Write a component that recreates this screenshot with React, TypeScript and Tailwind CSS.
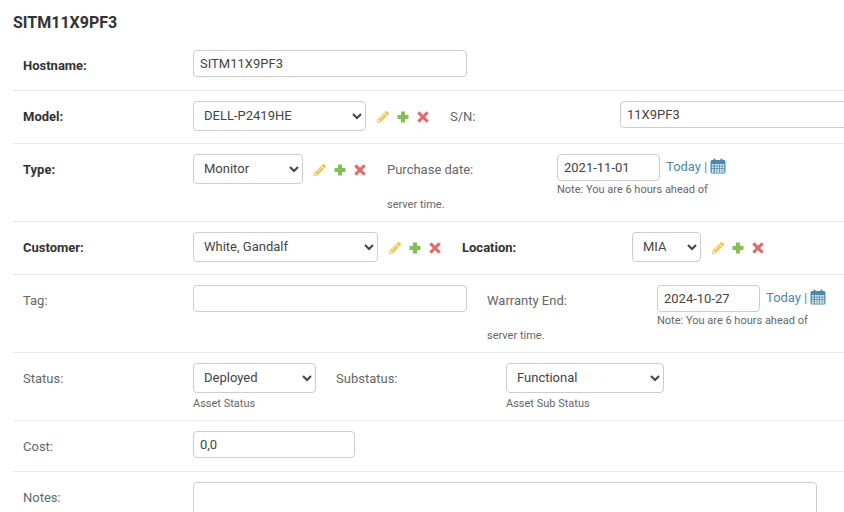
import React from "react";
import { FaPencilAlt } from "react-icons/fa";

const inputCls = "block h-[27px] shrink-0 rounded-[4px] border border-[#ccc] bg-white px-[6px] pb-[1px] text-[13px] text-[#444] outline-none";
const selectCls = "block h-[30px] shrink-0 rounded-[4px] border border-[#ccc] bg-white pl-[6px] pb-[2px] text-[13px] text-[#444] outline-none";

function Actions() {
  return (
    <div className="ml-[11px] mt-[10px] flex shrink-0 items-center gap-[8px]">
      <FaPencilAlt className="h-[12px] w-[12px] text-[#f1c550]" />
      <svg width="12" height="12" viewBox="0 0 12 12">
        <path d="M4 .5h4v3.5h3.5v4H8v3.5H4V8H.5V4H4z" fill="#82c055" />
      </svg>
      <svg width="12" height="12" viewBox="0 0 12 12">
        <path d="M2 2l8 8M10 2l-8 8" stroke="#e26a6a" strokeWidth="3.4" strokeLinecap="square" transform="translate(6 6) scale(.9) translate(-6 -6)" />
      </svg>
    </div>
  );
}

function Calendar() {
  return (
    <svg width="16" height="16" viewBox="0 0 16 16" className="ml-[3px]">
      <rect x="0.5" y="2" width="15" height="13.5" rx="1.5" fill="#4f88a8" />
      <rect x="3.5" y="0.5" width="2" height="3.5" rx="1" fill="#4f88a8" />
      <rect x="10.5" y="0.5" width="2" height="3.5" rx="1" fill="#4f88a8" />
      <g fill="#dfeaf0">
        {[6, 8.5, 11, 13].map((y) =>
          [1.8, 4.8, 7.3, 9.9, 12.4].map((x) => <rect key={`${x}-${y}`} x={x} y={y} width="1.9" height="1.7" />)
        )}
      </g>
    </svg>
  );
}

function DateField({ label, value }: { label: string; value: string }) {
  return (
    <div className="flex flex-col">
      <div className="flex items-start">
        <div className="w-[170px] shrink-0 pt-[6px] text-[13px] text-[#666]">{label}</div>
        <div>
          <div className="flex items-start">
            <input readOnly value={value} className={`${inputCls} w-[103px]`} />
            <a className="ml-[6px] mt-[3px] text-[13px] text-[#4f88a8]">Today</a>
            <span className="ml-[3px] mt-[3px] text-[13px] text-[#4f88a8]">|</span>
            <span className="mt-[4px]"><Calendar /></span>
          </div>
          <div className="mt-px text-[11px] leading-[16px] text-[#666]">Note: You are 6 hours ahead of</div>
        </div>
      </div>
      <div className="-mt-px text-[11px] leading-[16px] text-[#666]">server time.</div>
    </div>
  );
}

function Row({ label, bold, h, children }: { label: string; bold?: boolean; h: string; children?: React.ReactNode }) {
  return (
    <div className={`flex items-start border-b border-[#e8e8e8] pt-[10px] ${h}`}>
      <div className={`w-[180px] shrink-0 pl-[10px] pt-[6px] text-[13px] ${bold ? "font-bold text-[#333]" : "text-[#666]"}`}>{label}</div>
      {children}
    </div>
  );
}

export default function App() {
  return (
    <div className="h-[512px] w-[844px] overflow-hidden bg-white pl-[13px] font-['Roboto',sans-serif]">
      <h1 className="pt-[13px] text-[16px] font-bold leading-[19px] text-[#333]">SITM11X9PF3</h1>
      <div className="mt-[8px]">
        <Row label="Hostname:" bold h="h-[51px]">
          <input readOnly value="SITM11X9PF3" className={`${inputCls} w-[274px]`} />
        </Row>
        <Row label="Model:" bold h="h-[53px]">
          <select className={`${selectCls} w-[173px]`}><option>DELL-P2419HE</option></select>
          <Actions />
          <div className="ml-[21px] w-[170px] shrink-0 pt-[6px] text-[13px] text-[#666]">S/N:</div>
          <input readOnly value="11X9PF3" className={`${inputCls} w-[274px]`} />
        </Row>
        <Row label="Type:" bold h="h-[78px]">
          <select className={`${selectCls} w-[110px]`}><option>Monitor</option></select>
          <Actions />
          <div className="ml-[21px] shrink-0"><DateField label="Purchase date:" value="2021-11-01" /></div>
        </Row>
        <Row label="Customer:" bold h="h-[53px]">
          <select className={`${selectCls} w-[185px]`}><option>White, Gandalf</option></select>
          <Actions />
          <div className="ml-[21px] w-[170px] shrink-0 pt-[6px] text-[13px] font-bold text-[#333]">Location:</div>
          <select className={`${selectCls} w-[69px]`}><option>MIA</option></select>
          <Actions />
        </Row>
        <Row label="Tag:" h="h-[78px]">
          <input readOnly value="" className={`${inputCls} w-[274px]`} />
          <div className="ml-[20px] shrink-0"><DateField label="Warranty End:" value="2024-10-27" /></div>
        </Row>
        <Row label="Status:" h="h-[68px]">
          <div className="shrink-0">
            <select className={`${selectCls} w-[123px]`}><option>Deployed</option></select>
            <div className="mt-[3px] text-[11px] leading-[16px] text-[#666]">Asset Status</div>
          </div>
          <div className="ml-[20px] w-[170px] shrink-0 pt-[6px] text-[13px] text-[#666]">Substatus:</div>
          <div className="shrink-0">
            <select className={`${selectCls} w-[158px]`}><option>Functional</option></select>
            <div className="mt-[3px] text-[11px] leading-[16px] text-[#666]">Asset Sub Status</div>
          </div>
        </Row>
        <Row label="Cost:" h="h-[51px]">
          <input readOnly value="0,0" className={`${inputCls} w-[162px]`} />
        </Row>
        <Row label="Notes:" h="h-[60px]">
          <textarea readOnly className="block h-[80px] w-[624px] shrink-0 rounded-[4px] border border-[#ccc] bg-white outline-none" />
        </Row>
      </div>
    </div>
  );
}
